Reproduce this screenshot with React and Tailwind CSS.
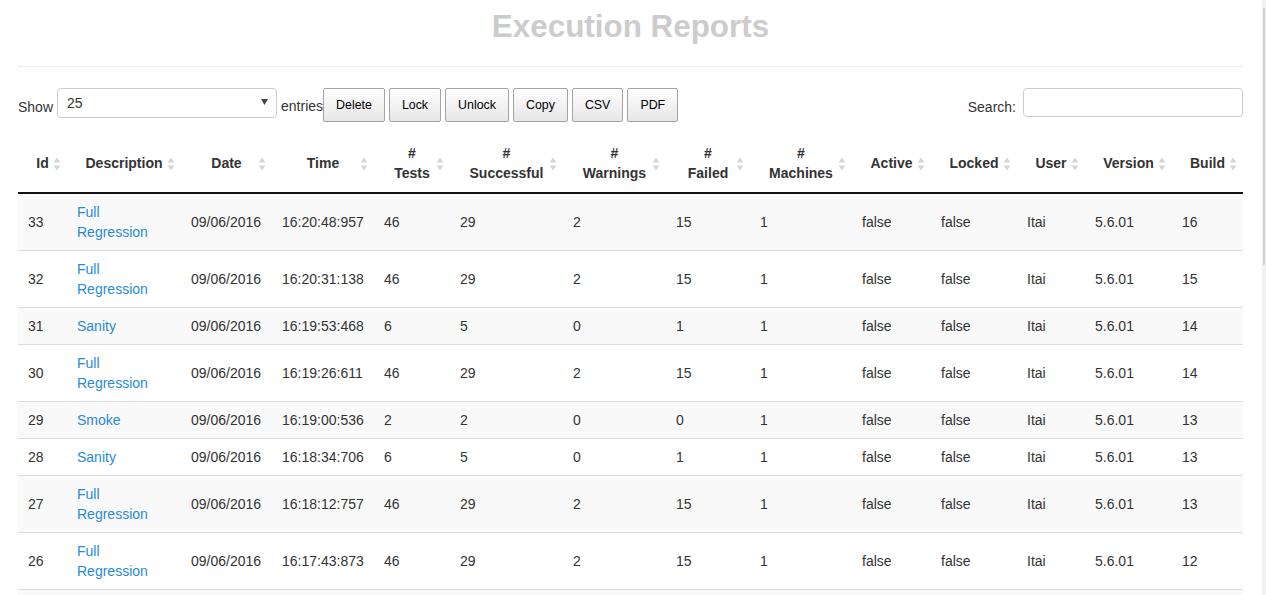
import React from "react";

const rows = [
  { id: 33, d: "Full Regression", t: "16:20:48:957", tests: 46, s: 29, w: 2, f: 15, b: 16 },
  { id: 32, d: "Full Regression", t: "16:20:31:138", tests: 46, s: 29, w: 2, f: 15, b: 15 },
  { id: 31, d: "Sanity", t: "16:19:53:468", tests: 6, s: 5, w: 0, f: 1, b: 14 },
  { id: 30, d: "Full Regression", t: "16:19:26:611", tests: 46, s: 29, w: 2, f: 15, b: 14 },
  { id: 29, d: "Smoke", t: "16:19:00:536", tests: 2, s: 2, w: 0, f: 0, b: 13 },
  { id: 28, d: "Sanity", t: "16:18:34:706", tests: 6, s: 5, w: 0, f: 1, b: 13 },
  { id: 27, d: "Full Regression", t: "16:18:12:757", tests: 46, s: 29, w: 2, f: 15, b: 13 },
  { id: 26, d: "Full Regression", t: "16:17:43:873", tests: 46, s: 29, w: 2, f: 15, b: 12 },
  { id: 25, d: "Sanity", t: "16:17:20:114", tests: 6, s: 5, w: 0, f: 1, b: 12 },
  { id: 24, d: "Full Regression", t: "16:16:58:402", tests: 46, s: 29, w: 2, f: 15, b: 11 },
];

const cols = [
  { label: ["Id"], w: "w-[49px]" },
  { label: ["Description"], w: "w-[114px]" },
  { label: ["Date"], w: "w-[91px]" },
  { label: ["Time"], w: "w-[102px]" },
  { label: ["#", "Tests"], w: "w-[76px]" },
  { label: ["#", "Successful"], w: "w-[113px]" },
  { label: ["#", "Warnings"], w: "w-[103px]" },
  { label: ["#", "Failed"], w: "w-[84px]" },
  { label: ["#", "Machines"], w: "w-[102px]" },
  { label: ["Active"], w: "w-[79px]" },
  { label: ["Locked"], w: "w-[86px]" },
  { label: ["User"], w: "w-[68px]" },
  { label: ["Version"], w: "w-[87px]" },
  { label: ["Build"], w: "w-[71px]" },
];

function SortIcon() {
  return (
    <svg
      className="absolute right-[6px] top-1/2 -translate-y-1/2"
      width="8"
      height="15"
      viewBox="0 0 8 15"
    >
      <polygon points="0.5,6 4,1 7.5,6" fill="#d6d6d6" />
      <polygon points="0.5,9 4,14 7.5,9" fill="#d6d6d6" />
    </svg>
  );
}

function Btn({ children }) {
  return (
    <button className="h-[34px] rounded-[2px] border border-[#a4a4a4] bg-linear-to-b from-white to-[#e6e6e6] px-[12px] text-[12.4px] leading-[16px] text-black">
      {children}
    </button>
  );
}

export default function App() {
  return (
    <div className="flex h-[595px] w-[1266px] overflow-hidden bg-white font-['Liberation_Sans',Arial,sans-serif] text-[14px] text-[#333]">
      <div className="w-[1262px] pl-[18px] pr-[19px]">
        <h1 className="mt-[9px] h-[35px] text-center text-[31.4px] font-bold leading-[35px] text-[#cccccc]">
          Execution Reports
        </h1>
        <div className="mt-[22px] border-t border-[#eeeeee]" />
        <div className="mt-[21px] flex h-[34px] items-start justify-between">
          <div className="flex h-[34px] items-center">
            <span className="mr-[4px] mt-[3px] leading-[20px]">Show</span>
            <div className="relative mb-[4px] flex h-[30px] w-[220px] items-start rounded-[4px] border border-[#cccccc] bg-white pl-[9px] pt-[4px] text-[14px] leading-[20px]">
              25
              <svg className="absolute right-[8px] top-[10px]" width="7" height="6" viewBox="0 0 7 6">
                <polygon points="0,0 7,0 3.5,6" fill="#444" />
              </svg>
            </div>
            <span className="ml-[4px] mt-[2px] leading-[20px]">entries</span>
            <div className="flex gap-[4px]">
              <Btn>Delete</Btn>
              <Btn>Lock</Btn>
              <Btn>Unlock</Btn>
              <Btn>Copy</Btn>
              <Btn>CSV</Btn>
              <Btn>PDF</Btn>
            </div>
          </div>
          <div className="flex h-[34px] items-center">
            <span className="mr-[7px] mt-[3px] leading-[20px]">Search:</span>
            <div className="mb-[5px] h-[29px] w-[220px] rounded-[4px] border border-[#cccccc] bg-white" />
          </div>
        </div>
        <table className="mt-[13px] w-[1225px] table-fixed border-collapse">
          <thead>
            <tr>
              {cols.map((c, i) => (
                <th
                  key={i}
                  className={`${c.w} relative border-b-2 border-[#111] px-[10px] pb-[9px] pt-[8px] text-center align-middle text-[14px] font-bold leading-[20px] text-[#333]`}
                >
                  {c.label.map((l, j) => (
                    <div key={j}>{l}</div>
                  ))}
                  <SortIcon />
                </th>
              ))}
            </tr>
          </thead>
          <tbody>
            {rows.map((r, i) => {
              const cells = [
                r.id,
                <span className="text-[#288ad6]">{r.d}</span>,
                "09/06/2016",
                r.t,
                r.tests,
                r.s,
                r.w,
                r.f,
                1,
                "false",
                "false",
                "Itai",
                "5.6.01",
                r.b,
              ];
              return (
                <tr key={r.id} className={i % 2 === 0 ? "bg-[#f9f9f9]" : "bg-white"}>
                  {cells.map((c, j) => (
                    <td
                      key={j}
                      className="border-t border-[#dddddd] px-[10px] py-[8px] text-left align-middle leading-[20px]"
                    >
                      {c}
                    </td>
                  ))}
                </tr>
              );
            })}
          </tbody>
        </table>
      </div>
      <div className="h-[595px] w-[4px] bg-[#f1f1f1]">
        <div className="ml-[1px] mt-[8px] h-[257px] w-[2px] bg-[#d2d2d2]" />
      </div>
    </div>
  );
}
